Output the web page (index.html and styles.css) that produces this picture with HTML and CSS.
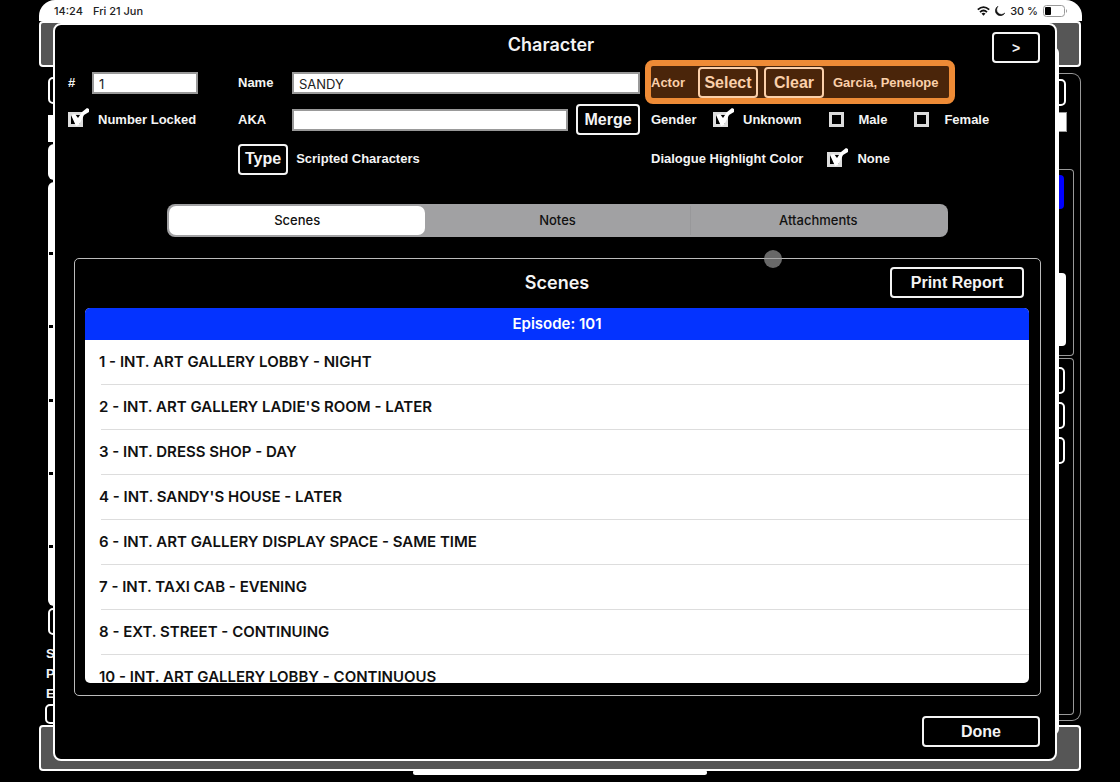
FILE: index.html
```html
<!DOCTYPE html>
<html lang="en">
<head>
<meta charset="utf-8">
<title>Character</title>
<link rel="stylesheet" href="styles.css">
</head>
<body>
<svg class="defs" aria-hidden="true">
  <symbol id="tick" viewBox="0 0 22 22">
    <path d="M3 8l4-1 3 4 4-6 5-4 2 1 0 3-5 3-5 10-3 1z" fill="#fff"/>
  </symbol>
</svg>
<div class="device">
  <header class="status">
    <span>14:24</span><span>Fri 21 Jun</span>
    <span class="status-right">
      <svg width="13" height="10" viewBox="0 0 13 10" fill="none" stroke="#111" stroke-width="1.8"><path d="M.8 3.7Q6.500-1.500 12.200 3.700M3 6.100Q6.500 3 10 6.100"/><path d="M4.500 7.500Q6.500 6 8.500 7.500L6.500 9.700Z" fill="#111" stroke="none"/></svg>
      <svg width="10" height="10" viewBox="0 0 10 10"><path d="M3 .3A5 5 0 1 0 9.800 7A4.300 4.300 0 0 1 3 .3Z" fill="#111" stroke="#111" stroke-width=".6"/></svg>
      <span>30 %</span>
      <svg width="25" height="12" viewBox="0 0 25 12"><rect x=".5" y=".5" width="21" height="11" rx="3" fill="none" stroke="#999"/><rect x="2" y="2" width="6" height="8" rx="1" fill="#000"/><path d="M23 4q2 2 0 4z" fill="#999"/></svg>
    </span>
  </header>
  <div class="bar"></div>
  <div class="backdrop">
    <div class="side">
      <div class="outline side-top"></div>
      <div class="white side-field"></div>
      <div class="white side-tab"></div>
      <div class="white side-list"><i></i><i></i><i></i><i></i><i></i></div>
      <div class="outline side-button"></div>
      <div class="letters"><b>S</b><b>P</b><b>E</b></div>
      <div class="outline side-last"></div>
    </div>
    <div class="rail"></div>
    <div class="right">
      <div class="outline right-top"></div>
      <div class="white right-field"></div>
      <div class="box box-one"><div class="blue"></div><div class="white right-note"></div></div>
      <div class="box box-two"><div class="outline"></div><div class="outline"></div><div class="outline"></div></div>
    </div>
  </div>
  <div class="bar"></div>
</div>
<div class="home"></div>

<main class="modal">
  <header class="modal-head">
    <h1>Character</h1>
    <button class="btn next">&gt;</button>
  </header>
  <form class="form">
    <div class="field first"><label class="num" for="num">#</label><input class="text short" id="num" value="1"></div>
    <div class="field first"><label class="lab" for="name">Name</label><input class="text" id="name" value="SANDY"></div>
    <div class="field actor"><span class="actor-label">Actor</span><button type="button" class="btn wide">Select</button><button type="button" class="btn wide">Clear</button><span class="actor-name">Garcia, Penelope</span></div>

    <label class="check"><span class="tick"><input type="checkbox" checked><svg><use href="#tick"/></svg></span>Number Locked</label>
    <div class="field"><label class="lab" for="aka">AKA</label><input class="text" id="aka"><button type="button" class="btn merge">Merge</button></div>
    <div class="field options"><span class="gender">Gender</span>
      <label class="check"><span class="tick"><input type="checkbox" checked><svg><use href="#tick"/></svg></span>Unknown</label>
      <label class="check"><span class="tick"><input type="checkbox"></span>Male</label>
      <label class="check"><span class="tick"><input type="checkbox"></span>Female</label>
    </div>

    <div class="field type"><button type="button" class="btn">Type</button><span>Scripted Characters</span></div>
    <div class="field dialogue"><span>Dialogue Highlight Color</span>
      <label class="check"><span class="tick"><input type="checkbox" checked><svg><use href="#tick"/></svg></span>None</label>
    </div>
  </form>
  <nav class="tabs">
    <button class="active">Scenes</button><button>Notes</button><button>Attachments</button>
  </nav>
  <section class="panel">
    <span class="pointer"></span>
    <header class="panel-head"><h2>Scenes</h2><button class="btn">Print Report</button></header>
    <div class="list">
      <h3>Episode: 101</h3>
      <ul>
        <li>1 - INT. ART GALLERY LOBBY - NIGHT</li>
        <li>2 - INT. ART GALLERY LADIE'S ROOM - LATER</li>
        <li>3 - INT. DRESS SHOP - DAY</li>
        <li>4 - INT. SANDY'S HOUSE - LATER</li>
        <li>6 - INT. ART GALLERY DISPLAY SPACE - SAME TIME</li>
        <li>7 - INT. TAXI CAB - EVENING</li>
        <li>8 - EXT. STREET - CONTINUING</li>
        <li>10 - INT. ART GALLERY LOBBY - CONTINUOUS</li>
      </ul>
    </div>
  </section>
  <footer class="foot"><button class="btn done">Done</button></footer>
</main>
</body>
</html>
```

FILE: styles.css
```css
* { box-sizing: border-box; }
html, body { height: 100%; }
body {
  margin: 0;
  position: relative;
  overflow: hidden;
  background: #000;
  color: #f4f4f4;
  font: bold 13px/18px "Liberation Sans", Arial, sans-serif;
}
h1, h2, h3, ul { margin: 0; padding: 0; }
button, input { font: inherit; margin: 0; }
.defs { position: absolute; width: 0; height: 0; }

.device { height: 100%; padding: 0 39px 11px; display: flex; flex-direction: column; }
.status {
  flex: none;
  height: 21px;
  margin-right: -1px;
  padding: 0 14px 0 15px;
  display: flex;
  align-items: center;
  gap: 10px;
  background: #fff;
  color: #222;
  border-radius: 16px 16px 0 0;
  font: 500 11px/18px Inter, sans-serif;
}
.status-right { margin-left: auto; display: flex; align-items: center; gap: 5px; }
.bar { flex: none; height: 46px; background: #565656; border: 2px solid #fff; border-radius: 4px; }
.backdrop { flex: 1; min-height: 0; display: flex; justify-content: space-between; }
.outline { border: 2px solid #fff; border-radius: 5px; }
.white { background: #fff; }

.side { width: 40px; padding: 10px 0 1px 9px; display: flex; flex-direction: column; }
.side-top { height: 27px; margin-bottom: 11px; }
.side-field { height: 27px; margin-bottom: 2px; }
.side-tab { height: 36px; margin-bottom: 2px; border-radius: 6px; }
.side-list { flex: 1; border-radius: 6px; display: flex; flex-direction: column; justify-content: space-between; padding: 70px 0 58px 1px; margin-bottom: 2px; }
.side-list i { width: 4px; height: 3px; background: #000; }
.side-button { height: 27px; margin-bottom: 10px; }
.letters { margin-left: -2px; display: flex; flex-direction: column; gap: 2px; margin-bottom: 1px; }
.side-last { height: 20px; margin-left: -3px; }

.rail { z-index: 1; width: 30px; margin: -20px 0 -10px auto; background: #fff; border-radius: 6px; }
.right {
  width: 62px;
  margin: 6px 0 4px -40px;
  padding-top: 5px;
  display: flex;
  flex-direction: column;
  align-items: flex-start;
  border: 1px solid #999;
  border-left: 0;
  border-radius: 0 9px 9px 0;
}
.right-top { width: 47px; height: 27px; }
.right-field { width: 48px; height: 20px; margin: 6px 0 37px; border: 1px solid #999; }
.box { width: 55px; border: 1px solid #999; border-left: 0; border-radius: 0 4px 4px 0; display: flex; flex-direction: column; }
.box-one { height: 187px; padding-top: 5px; }
.box-two { flex: 1; margin: 2px 0 5px; padding-top: 8px; gap: 8px; }
.box-two .outline { width: 46px; height: 27px; }
.blue { width: 45px; height: 34px; background: #00f; border-radius: 4px; }
.right-note { width: 47px; height: 73px; margin-top: 64px; border-radius: 4px; }
.home { position: absolute; left: 50%; bottom: 7px; width: 294px; height: 5px; margin-left: -147px; border-radius: 3px; background: #fff; }

.modal {
  position: absolute;
  z-index: 2;
  inset: 23px 63px 21px 53px;
  display: flex;
  flex-direction: column;
  background: #000;
  border: 2px solid #fff;
  border-radius: 8px;
}
.btn {
  height: 31px;
  padding: 0 5px;
  color: inherit;
  background: transparent;
  border: 2px solid currentColor;
  border-radius: 4px;
  font: bold 16px/18px "Liberation Sans", Arial, sans-serif;
}
.modal-head { height: 35px; padding: 7px 15px 0; display: grid; grid-template-columns: 48px 1fr 48px; }
.modal-head h1 { grid-column: 2; margin-right: 8px; text-align: center; font: 600 18px/26px Inter, sans-serif; }
.next { width: 48px; font-size: 14px; }

.form {
  display: grid;
  grid-template-columns: 170px 1fr 389px;
  grid-template-rows: 44px 31px 32px;
  padding: 0 15px 0 13px;
  align-items: center;
}
.field, .check { display: flex; align-items: center; }
.form > .field:nth-child(3n+2) { padding-right: 11px; }
.form > .first { padding-top: 2px; }
.num { width: 24px; }
.lab { width: 54px; flex: none; }
.text {
  flex: 1;
  min-width: 0;
  height: 22px;
  padding: 2px 5px 0;
  border: 2px solid #999;
  border-radius: 0;
  background: #fff;
  color: #222;
  font: 400 13px/16px Inter, sans-serif;
}
.short { flex: none; width: 106px; }
.actor {
  justify-self: start;
  height: 44px;
  margin-left: -6px;
  padding: 1px 10px 0 0;
  gap: 6px;
  border: 6px solid #ee8b36;
  border-radius: 8px;
  background: #4a250a;
  color: #fbd0aa;
}
.actor-label { width: 41px; }
.actor .wide { width: 60px; padding: 0; }
.actor-name { margin-left: 3px; }
.merge { width: 64px; margin-left: 8px; padding: 0; }
.check { gap: 15px; }
.tick { position: relative; display: flex; }
.tick input { appearance: none; width: 15px; height: 15px; border: 3px solid #ddd; background: #000; }
.tick svg { position: absolute; left: 0; top: -5px; width: 22px; height: 22px; pointer-events: none; }
.options .check { margin-right: 27px; }
.gender { width: 62px; }
.type { grid-column: 2; margin-top: 16px; gap: 8px; }
.dialogue { margin-top: 16px; gap: 24px; }

.tabs {
  height: 33px;
  margin: 37px 107px 0 112px;
  padding: 2px;
  display: grid;
  grid-template-columns: repeat(3, 1fr);
  gap: 4px;
  background: #a1a1a3;
  border-radius: 8px;
}
.tabs button { padding: 0 0 2px; border: 0; border-radius: 7px; background: transparent; color: #111; font: 500 13px/18px Inter, sans-serif; }
.tabs .active { background: #fff; }
.tabs button:last-child { border-left: 1px solid #98989a; border-radius: 0; }

.panel {
  position: relative;
  flex: 1;
  min-height: 0;
  margin: 21px 14px 0 19px;
  padding: 8px 11px 12px 10px;
  display: flex;
  flex-direction: column;
  border: 1px solid #bbb;
  border-radius: 5px;
}
.pointer { position: absolute; left: 689px; top: -9px; width: 18px; height: 18px; border-radius: 50%; background: rgba(160, 160, 160, .65); }
.panel-head { display: grid; grid-template-columns: 134px 1fr 134px; margin: 0 5px 10px; }
.panel-head h2 { grid-column: 2; text-align: center; font: 600 18px/31px Inter, sans-serif; }
.list { flex: 1; min-height: 0; overflow: hidden; background: #fff; color: #111; border-radius: 5px; font: 600 15px/20px Inter, sans-serif; }
.list h3 { height: 32px; background: #0433ff; color: #fff; text-align: center; font: 600 15px/32px Inter, sans-serif; }
.list ul { list-style: none; }
.list li { height: 45px; margin-left: 16px; padding-top: 12px; border-bottom: 1px solid #ddd; text-indent: -2px; }
.foot { padding: 20px 15px 12px; display: flex; justify-content: flex-end; }
.done { width: 118px; }
```
